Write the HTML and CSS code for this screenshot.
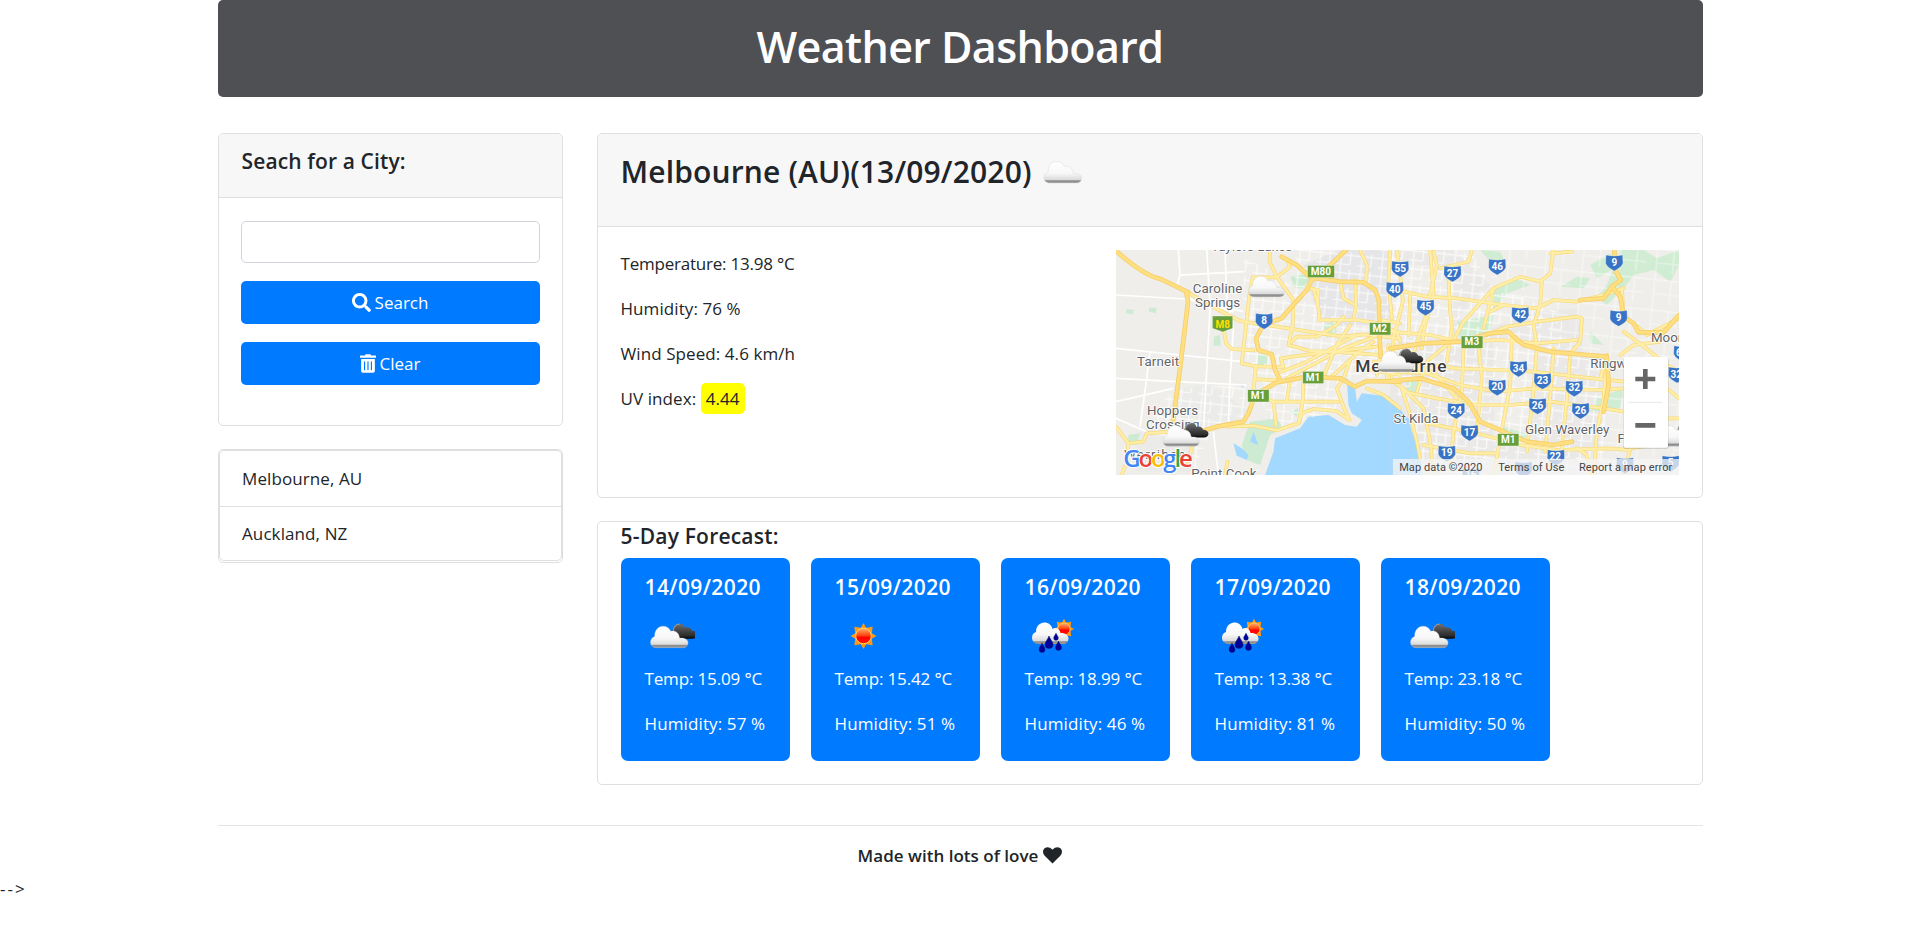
FILE: index.html
```html
<!DOCTYPE html>
<html lang="en">
<head>
<meta charset="utf-8">
<title>Weather Dashboard</title>
<link rel="stylesheet" href="styles.css">
</head>
<body>
<svg class="defs" width="0" height="0" aria-hidden="true">
  <defs>
    <linearGradient id="gLight" x1="0" y1="0" x2="0" y2="1"><stop offset="0" stop-color="#fff"/><stop offset=".55" stop-color="#f8f8f8"/><stop offset=".84" stop-color="#dcdcdc"/><stop offset=".9" stop-color="#8a8a8a"/><stop offset="1" stop-color="#a0a0a0"/></linearGradient>
    <linearGradient id="gDark" x1="0" y1="0" x2="0" y2="1"><stop offset="0" stop-color="#707070"/><stop offset=".5" stop-color="#444"/><stop offset=".8" stop-color="#2c2c2c"/><stop offset="1" stop-color="#050505"/></linearGradient>
    <linearGradient id="gSun" x1="0" y1="0" x2="0" y2="1"><stop offset="0" stop-color="#ffb070"/><stop offset=".45" stop-color="#ff4a10"/><stop offset=".6" stop-color="#f00"/><stop offset="1" stop-color="#ff1a00"/></linearGradient>
    <g id="cloudShape"><path d="M6 22C2 22 0 19.500 0 16.500C0 13.500 2 11.500 4.200 10.800C3.800 5 7.500 0.500 12.500 0.500C16.500 0.500 19 2.500 20.200 5.500C24 4.300 28 6.500 28.800 11C29.200 11.200 29.200 12 29.200 12.500C33 11.800 37.500 13.500 37.500 17C37.500 20 35.500 22 32.500 22Z"/></g>
    <g id="cloud"><use href="#cloudShape" fill="url(#gLight)" stroke="#ccc" stroke-opacity=".6" stroke-width=".6"/></g>
    <g id="broken">
      <path d="M22 6C22 1 26 -2.500 30 -2C33 -1.500 34 0 34.500 2C38 .500 40.500 2.500 41.500 5C45 5 47 7 47 9C47 11.500 45 13 42 13H28Z" fill="url(#gDark)"/>
      <path d="M23 5C23 1 26-1.800 29-1.500" fill="none" stroke="#aaa" stroke-width="1"/>
      <use href="#cloud"/>
    </g>
    <g id="sun">
      <path d="M0-13L2.700-8.300L9.200-9.200L8.300-2.700L13 0L8.300 2.700L9.200 9.200L2.700 8.300L0 13L-2.700 8.300L-9.200 9.200L-8.300 2.700L-13 0L-8.300-2.700L-9.200-9.200L-2.700-8.300Z" fill="#ff9a10"/>
      <circle r="7.800" fill="url(#gSun)" stroke="#ffd56a" stroke-width="1"/>
    </g>
    <g id="drop"><path d="M0-6C1-3 4 0 4 2.500A4 4 0 0 1-4 2.500C-4 0-1-3 0-6Z" fill="#00009a" stroke="#001050" stroke-width=".5"/></g>
    <g id="rain">
      <use href="#sun" transform="translate(32 6) scale(.78)"/>
      <path d="M7 21C2 21 0 18 0 14.500C0 11.500 2 9.500 4 9C4 3 8-.500 12.500-.500C16.500-.500 19.500 2 20.500 6C24 3.500 28 6 28.500 10C33 10 36.500 12 36.500 15.500C36.500 19 34 21 31 21Z" fill="url(#gLight)"/>
      <use href="#drop" x="17" y="19"/><use href="#drop" transform="translate(10 24.500) scale(.75)"/><use href="#drop" transform="translate(26.500 22.500) scale(.75)"/><use href="#drop" transform="translate(24 13.500) scale(.6)"/>
    </g>
    <g id="shield"><path d="M-25-22Q0-16 25-22L26 3Q22 15 0 26Q-22 15-26 3Z" fill="#3873c5" stroke="#fff" stroke-opacity=".5" stroke-width="2"/></g>
  </defs>
</svg>

<div class="container">
  <header class="banner"><h1>Weather Dashboard</h1></header>
  <div class="row">
    <aside class="side">
      <section class="card search">
        <div class="card-header"><h5>Seach for a City:</h5></div>
        <div class="card-body">
          <input class="field" type="text" aria-label="City">
          <button class="btn"><svg width="19" height="19" viewBox="0 0 512 512"><path fill="currentColor" d="M505 442.700L405.300 343c-4.500-4.500-10.600-7-17-7H372c27.600-35.300 44-79.700 44-128C416 93.100 322.900 0 208 0S0 93.100 0 208s93.100 208 208 208c48.300 0 92.700-16.400 128-44v16.300c0 6.400 2.500 12.500 7 17l99.700 99.700c9.400 9.400 24.600 9.400 33.900 0l28.300-28.300c9.400-9.400 9.400-24.600.1-34zM208 336c-70.700 0-128-57.200-128-128 0-70.700 57.200-128 128-128 70.700 0 128 57.200 128 128 0 70.700-57.200 128-128 128z"/></svg><span>Search</span></button>
          <button class="btn clear"><svg width="16" height="19" viewBox="0 0 448 512"><path fill="currentColor" fill-rule="evenodd" d="M32 464a48 48 0 0 0 48 48h288a48 48 0 0 0 48-48V128H32zm272-256a16 16 0 0 1 32 0v224a16 16 0 0 1-32 0zm-96 0a16 16 0 0 1 32 0v224a16 16 0 0 1-32 0zm-96 0a16 16 0 0 1 32 0v224a16 16 0 0 1-32 0zM432 32H312l-9.400-18.700A24 24 0 0 0 281.100 0H166.800a23.700 23.700 0 0 0-21.400 13.300L136 32H16A16 16 0 0 0 0 48v32a16 16 0 0 0 16 16h416a16 16 0 0 0 16-16V48a16 16 0 0 0-16-16z"/></svg><span>Clear</span></button>
        </div>
      </section>
      <section class="card history">
        <ul class="list"><li>Melbourne, AU</li><li>Auckland, NZ</li></ul>
      </section>
    </aside>
    <main class="main">
      <section class="card current">
        <div class="card-header"><h3>Melbourne (AU)(13/09/2020)</h3><svg class="now" width="40" height="24" viewBox="-1 -1 40 24"><use href="#cloud"/></svg></div>
        <div class="card-body">
          <div class="stats">
            <p class="temp">Temperature: 13.98 °C</p>
            <p>Humidity: 76 %</p>
            <p>Wind Speed: 4.6 km/h</p>
            <p>UV index: <span class="uv">4.44</span></p>
          </div>
          <svg class="map" viewBox="0 0 1688 675" preserveAspectRatio="none">
            <defs>
              <pattern id="streets" width="62" height="54" patternUnits="userSpaceOnUse" patternTransform="rotate(6)"><path d="M0 10H62M0 38H40M12 0V54M40 0V38" stroke="#fff" stroke-width="4" fill="none"/></pattern>
              <pattern id="blocks" width="110" height="92" patternUnits="userSpaceOnUse" patternTransform="rotate(6)"><path d="M0 20H110M30 0V92M80 20V92M30 62H110" stroke="#fff" stroke-width="4" fill="none"/></pattern>
              <g id="west">
                <path d="M228 140L320 192L390 228L440 236L520 248L610 262L700 275L760 268L870 280"/>
                <path d="M340 250L348 295L365 312L430 316M480 15L478 50L500 95L550 165L548 240L535 300L600 318L700 322L812 330"/>
                <path d="M428 97L418 150L395 355L437 364L430 440M428 97L500 97L540 65L530 45"/>
                <path d="M437 364L520 366L512 340L640 322L800 305M437 403L500 405M610 130L625 190L628 225L740 225L808 235"/>
                <path d="M600 132L625 135L622 180M750 15L770 60L768 110M735 105L738 180L730 225M545 290L560 275L620 275L680 240L700 215"/>
                <path d="M440 450L490 470L580 470L685 470M490 470L498 540M580 400L578 470L565 535M540 400L530 470"/>
                <path d="M500 385L580 355L740 270M530 400L700 310L808 270M640 395L680 300L720 240M660 400L735 330L790 290"/>
                <path d="M720 345L700 400L680 430L700 485L718 525L680 498L610 492L575 505L565 535L500 556L430 542L350 545"/>
                <path d="M18 545L55 595L100 590L110 565L180 560M55 595L50 650L35 690M250 590L232 660M352 650L345 690"/>
                <path d="M832 250L860 260L870 290M790 350L870 370M780 375L870 390M810 330L800 390M835 300L830 400M770 430L820 450L870 490"/>
                <path d="M808 225L870 235M840 15L835 110L845 220M690 110L700 160L735 180"/>
              </g>
              <g id="westMain">
                <path d="M18 18C60 55 110 95 152 102L235 142M228 140L234 170L210 370L190 520L185 545"/>
                <path d="M515 35L560 60L600 97L690 110L760 112L795 135L806 165L808 270L812 335M708 15L655 65L603 108L590 135L540 190L515 220L460 238L438 280L445 315L485 328L495 375L510 405"/>
                <path d="M270 560L320 545L400 530L415 505L435 450L500 412L590 395L690 400L735 425L770 408L870 410"/>
              </g>
              <g id="east">
                <path d="M20 15L30 90L38 170L10 280L5 400M120 15L130 150L100 260L95 310M175 100L180 200L185 250L170 350M0 130L110 155L200 160L340 180"/>
                <path d="M245 15L235 50L150 70M190 285L220 230L310 130L390 95L450 110L480 85L490 15M455 110L450 180L430 240L440 310L430 430L410 620"/>
                <path d="M300 200L340 180L440 190L490 165L560 170L640 150L700 130M290 270L350 245L440 230L560 215L575 220L570 290L545 320"/>
                <path d="M675 80L690 105L665 125M695 130L700 230M545 20L480 25M0 330L90 355L200 370L330 375L430 380L560 395L700 410"/>
                <path d="M0 260L120 270L210 290L330 285L440 295L560 285M0 380L110 385L210 420L320 440L440 430L640 435L700 430"/>
                <path d="M220 310L215 440L190 560L180 660M265 300L275 400L260 560M365 270L360 420L330 580L310 690M490 310L480 450L465 620M540 320L530 460L510 650M650 330L640 460L620 560L610 690"/>
                <path d="M40 440L140 460L260 480L360 480L480 470L640 490L700 500M90 530L260 565L390 600L500 615L650 610L720 615M100 600L240 625L320 625"/>
                <path d="M35 430L60 510L80 590L90 640M0 405L40 430L100 490L120 590L130 680M0 360L130 380L200 460"/>
                <path d="M735 240L770 270L866 220M700 260L755 300L830 360L866 380M690 330L730 300L810 290M720 610L780 600L866 560M830 430L866 460M650 330L630 400M170 300L110 350L80 440"/>
                <path d="M720 610L700 690M560 610L590 630L600 690M835 520L866 520M120 180L90 260L60 360M310 130L280 250M130 20L140 60L120 150M60 150L55 270"/>
              </g>
              <g id="eastMain">
                <path d="M0 310L100 295L210 290L300 265L355 260L400 300L480 320L590 330L650 335L655 420L640 500"/>
                <path d="M0 408L90 400L190 430L235 470L270 530L340 560L410 590L490 600L545 590"/>
                <path d="M672 15L675 75L692 105L665 125L690 155L700 215L730 235L745 262L820 262L866 210M665 125L640 160L570 165"/>
              </g>
            </defs>
            <rect width="1688" height="675" fill="#efeeea"/>
            <g transform="translate(-18 -15)">
              <path d="M580 60L690 15H870V240H740L650 250L610 170Z" fill="#e6e6e8"/>
              <path d="M80 560L200 550L250 600L250 680H80ZM200 430L300 420L420 500L360 550H200Z" fill="#ebebe9"/>
              <g fill="#cdebd2"><path d="M540 95L600 85L590 130L555 130ZM443 325H472V360H443ZM312 275L330 270L332 302H310ZM117 188L140 188L138 205L117 200ZM50 192L72 195L68 208L48 205ZM420 530L500 520L520 550L480 570L450 660L410 645L395 600ZM55 570L90 565L80 600L55 590ZM540 500L565 490L560 515ZM640 240L670 230L680 260L650 280Z"/></g>
              <path d="M465 690L490 620L495 580L570 550L595 515L655 510L705 540L740 545L755 525L725 505L715 480L710 400L735 430L740 470L755 445L840 455L870 480V690Z" fill="#a3d8ff"/>
              <path d="M370 595L395 610L415 630L410 645L380 632ZM430 560L420 590L445 600ZM390 415L410 435L395 425Z" fill="#a3d8ff"/>
            </g>
            <g transform="translate(822 -15)">
              <path d="M0 15H190L300 120L200 220L300 250L440 200L560 190L580 325L650 340L640 600L560 690H0Z" fill="#eae9e8"/>
              <path d="M0 60H190V280H0ZM310 290H430V600H310Z" fill="#efeeea"/>
              <g fill="#d0ecd3"><path d="M270 15L330 20L350 60L300 50ZM300 140L380 100L420 120L350 145L310 200ZM200 230L310 210L300 260L210 280ZM510 125L560 95L600 100L580 130ZM600 60L660 25L690 60L620 100ZM690 15H760L800 40L866 15V60L840 110L790 75L730 90L700 130L650 180L620 160L650 120ZM600 260L640 300L600 295ZM340 545L420 570L350 600ZM620 460L700 430L690 490L600 500ZM50 400L90 410L80 440H50Z"/></g>
              <path d="M0 465L25 490L55 520L65 560L90 610L95 690H0Z" fill="#a3d8ff"/>
            </g>
            <g transform="translate(-18 -15)">
              <path d="M560 15H870V420L740 400L430 440L420 320L540 290ZM100 545L190 430L410 420L400 530L300 560L250 690L200 600ZM430 430L690 400L700 490L500 550ZM400 40L540 100V300L400 350Z" fill="url(#streets)" opacity=".7"/>
              <path d="M18 150L228 162L400 200M18 310L210 330L400 350M18 400L200 410L410 420M205 15L210 90L400 80M290 15L300 180L370 200M210 90L200 125M120 320L110 400L90 545M18 470L190 430M345 15L350 160L370 250L360 400L355 530M240 160L300 190L280 560M18 520L110 560M310 560L325 690M500 560L490 550" fill="none" stroke="#fff" stroke-width="5"/>
            </g>
            <g transform="translate(822 -15)">
              <path d="M0 15H240L300 120L500 200L570 340L650 350L640 690H100L60 480L0 430Z" fill="url(#streets)" opacity=".75"/>
              <path d="M310 15H866V690H640L580 320L300 120Z" fill="url(#blocks)" opacity=".45"/>
            </g>
            <g fill="none" stroke-linejoin="round" stroke-linecap="round">
              <g transform="translate(-18 -15)"><use href="#west" class="r1"/></g><g transform="translate(822 -15)"><use href="#east" class="r1"/></g>
              <g transform="translate(-18 -15)"><use href="#west" class="r2"/></g><g transform="translate(822 -15)"><use href="#east" class="r2"/></g>
              <g transform="translate(-18 -15)"><use href="#westMain" class="m1"/></g><g transform="translate(822 -15)"><use href="#eastMain" class="m1"/></g>
              <g transform="translate(-18 -15)"><use href="#westMain" class="m2"/></g><g transform="translate(822 -15)"><use href="#eastMain" class="m2"/></g>
            </g>
            <g transform="translate(-18 -15)" class="place">
              <text x="303" y="19" textLength="243">Taylors Lakes</text>
              <text x="248" y="145" textLength="149">Caroline</text><text x="255" y="186" textLength="135">Springs</text>
              <text x="81" y="364" textLength="126">Tarneit</text>
              <text x="111" y="511" textLength="153">Hoppers</text><text x="108" y="551" textLength="160">Crossing</text>
              <text x="42" y="643" textLength="184">Werribee</text><text x="244" y="698" textLength="195">Point Cook</text>
              <text x="735" y="381" class="city" textLength="274">Melbourne</text>
              <g class="tag"><rect x="592" y="61" width="81" height="37"/><rect x="778" y="233" width="64" height="37"/><rect x="578" y="379" width="63" height="37"/><rect x="413" y="434" width="64" height="37"/><path d="M307 213H368V250L338 261L307 250Z"/></g>
              <g class="num"><text x="632" y="90">M80</text><text x="809" y="262">M2</text><text x="609" y="408">M1</text><text x="444" y="463">M1</text><text x="338" y="248" fill="#ffe000">M8</text></g>
              <use href="#shield" x="462" y="227"/><text class="num" x="462" y="237">8</text>
            </g>
            <g transform="translate(822 -15)">
              <g class="place"><text x="10" y="534" textLength="135">St Kilda</text><text x="404" y="567" textLength="253">Glen Waverley</text><text x="600" y="369">Ringwood</text><text x="782" y="290">Mooroolbark</text><text x="682" y="593">Ferntree Gully</text></g>
              <g class="tag"><rect x="213" y="273" width="65" height="37"/><rect x="322" y="566" width="64" height="37"/></g>
              <g><use href="#shield" x="30" y="70"/><use href="#shield" x="14" y="133"/><use href="#shield" x="187" y="85"/><use href="#shield" x="321" y="64"/><use href="#shield" x="106" y="186"/><use href="#shield" x="390" y="209"/><use href="#shield" x="672" y="52"/><use href="#shield" x="685" y="218"/><use href="#shield" x="385" y="370"/><use href="#shield" x="321" y="426"/><use href="#shield" x="457" y="407"/><use href="#shield" x="552" y="429"/><use href="#shield" x="442" y="482"/><use href="#shield" x="571" y="496"/><use href="#shield" x="198" y="496"/><use href="#shield" x="238" y="562"/><use href="#shield" x="170" y="624"/><use href="#shield" x="497" y="636"/><use href="#shield" x="860" y="388"/><use href="#shield" x="876" y="324"/><use href="#shield" x="704" y="660"/><use href="#shield" x="841" y="654"/><use href="#shield" x="400" y="672"/><use href="#shield" x="242" y="692"/></g>
              <g class="num"><text x="30" y="80">55</text><text x="14" y="143">40</text><text x="187" y="95">27</text><text x="321" y="74">46</text><text x="106" y="196">45</text><text x="390" y="219">42</text><text x="672" y="62">9</text><text x="685" y="228">9</text><text x="385" y="380">34</text><text x="321" y="436">20</text><text x="457" y="417">23</text><text x="552" y="439">32</text><text x="442" y="492">26</text><text x="571" y="506">26</text><text x="198" y="506">24</text><text x="238" y="572">17</text><text x="170" y="634">19</text><text x="495" y="644">22</text><text x="858" y="398">32</text><text x="866" y="334">6</text><text x="704" y="668">9</text><text x="841" y="662">5</text><text x="242" y="698">16</text><text x="245" y="301">M3</text><text x="354" y="594">M1</text></g>
            </g>
            <g transform="translate(-18 -15)">
              <use href="#cloud" transform="translate(415 92) scale(2.900)"/><use href="#broken" transform="translate(159 540) scale(2.900)"/><use href="#broken" transform="translate(803 317) scale(2.900)"/>
              <use href="#broken" transform="translate(1638 540) scale(2.900)"/>
              <text class="logo" x="40" y="665" textLength="208"><tspan fill="#4285f4">G</tspan><tspan fill="#ea4335">o</tspan><tspan fill="#fbbc05">o</tspan><tspan fill="#4285f4">g</tspan><tspan fill="#34a853">l</tspan><tspan fill="#ea4335">e</tspan></text>
            </g>
            <g transform="translate(822 -15)">
              <rect x="698" y="338" width="137" height="274" rx="8" fill="#000" opacity=".14"/>
              <rect x="700" y="336" width="133" height="272" rx="6" fill="#fff"/><path d="M714 472H816" stroke="#e6e6e6" stroke-width="3"/>
              <path d="M735 402H795M765 372V432M735 541H795" stroke="#666" stroke-width="14"/>
              <rect x="8" y="642" width="860" height="48" fill="#f5f5f5" opacity=".76"/>
              <g class="legal"><text x="27" y="678" textLength="250">Map data ©2020</text><text x="324" y="678" textLength="198">Terms of Use</text><text x="566" y="678" textLength="280">Report a map error</text></g>
            </g>
          </svg>
        </div>
      </section>
      <section class="card forecast">
        <h5>5-Day Forecast:</h5>
        <div class="days">
          <article class="day"><h5>14/09/2020</h5><svg width="50" height="50" viewBox="0 0 50 50"><use href="#broken" transform="translate(5.500 14.700)"/></svg><p>Temp: 15.09 °C</p><p>Humidity: 57 %</p></article>
          <article class="day"><h5>15/09/2020</h5><svg width="50" height="50" viewBox="0 0 50 50"><use href="#sun" transform="translate(28.500 25)"/></svg><p>Temp: 15.42 °C</p><p>Humidity: 51 %</p></article>
          <article class="day"><h5>16/09/2020</h5><svg width="50" height="50" viewBox="0 0 50 50"><use href="#rain" transform="translate(7 12)"/></svg><p>Temp: 18.99 °C</p><p>Humidity: 46 %</p></article>
          <article class="day"><h5>17/09/2020</h5><svg width="50" height="50" viewBox="0 0 50 50"><use href="#rain" transform="translate(7 12)"/></svg><p>Temp: 13.38 °C</p><p>Humidity: 81 %</p></article>
          <article class="day"><h5>18/09/2020</h5><svg width="50" height="50" viewBox="0 0 50 50"><use href="#broken" transform="translate(5.500 14.700)"/></svg><p>Temp: 23.18 °C</p><p>Humidity: 50 %</p></article>
        </div>
      </section>
    </main>
  </div>
  <footer class="footer"><span>Made with lots of love</span><svg width="19" height="17" viewBox="0 0 19 17"><path fill="currentColor" d="M9.500 16.600L1.700 8.800C-.600 6.300-.400 3 1.600 1.300C3.800-.500 7 0 9 2.200L9.500 2.700L10 2.200C12-.100 15.200-.500 17.400 1.300C19.400 3 19.600 6.300 17.300 8.800Z"/></svg></footer>
</div>
<div class="stray">--&gt;</div>
</body>
</html>
```
FILE: styles.css
```css
* { box-sizing: border-box; }
body { margin: 0; background: #fff; color: #212529; font: 400 17px/27px "Open Sans", "Noto Sans", sans-serif; letter-spacing: 0; }
h1, h3, h5, p, ul { margin: 0; padding: 0; font-weight: 600; }
p { font-weight: 400; }
.defs { position: absolute; }
.container { width: 1485px; margin: 0 auto; }
.banner { height: 97px; background: #4f5054; border-radius: 5px; color: #fff; display: flex; justify-content: center; padding-top: 20px; }
.banner h1 { font-size: 43px; line-height: 54px; letter-spacing: -0.6px; }
.row { display: flex; gap: 34px; margin-top: 36px; align-items: flex-start; }
.side { width: 345px; display: flex; flex-direction: column; gap: 23px; }
.main { width: 1106px; display: flex; flex-direction: column; gap: 23px; }
.card { border: 1px solid #dfdfdf; border-radius: 5px; background: #fff; }
.card-header { background: #f7f7f7; border-bottom: 1px solid #dfdfdf; border-radius: 4px 4px 0 0; padding: 14px 23px; }
h5 { font-size: 21px; line-height: 27px; letter-spacing: 0.2px; }
.search { height: 293px; }
.search .card-header { height: 64px; }
.search .card-header h5 { letter-spacing: 0.12px; }
.search .card-body { padding: 23px 22px; display: flex; flex-direction: column; gap: 18px; }
.field { height: 42px; width: 100%; border: 1px solid #ced4da; border-radius: 5px; }
.btn { height: 43px; border: 0; border-radius: 5px; background: #007bff; color: #fff; font: inherit; letter-spacing: inherit; display: flex; align-items: center; justify-content: center; gap: 4px; padding: 0 0 1px; }
.history { height: 114px; }
.list { list-style: none; border: 1px solid #dfdfdf; border-radius: 5px; height: 111px; font-weight: 400; }
.list li { height: 55px; padding: 14px 22.5px; letter-spacing: 0.1px; }
.list li + li { border-top: 1px solid #dfdfdf; padding-top: 13px; }
.current { height: 365px; }
.current .card-header { height: 93px; padding: 19px 23px; display: flex; gap: 11px; }
h3 { font-size: 30px; line-height: 38px; letter-spacing: 0.15px; }
.now { margin-top: 7px; }
.current .card-body { padding: 23px; display: flex; justify-content: space-between; }
.stats { display: flex; flex-direction: column; gap: 18px; letter-spacing: 0.08px; }
.stats .temp { letter-spacing: -0.22px; }
.uv { background: #ff0; border-radius: 5px; padding: 4px 5px; }
.map { width: 563px; height: 225px; display: block; overflow: hidden; }
.r1 { stroke: #f8d978; stroke-width: 11px; }
.r2 { stroke: #ffeea8; stroke-width: 7px; }
.m1 { stroke: #f5ce69; stroke-width: 14px; }
.m2 { stroke: #ffdf80; stroke-width: 9px; }
.place text { font: 400 40px Roboto, sans-serif; letter-spacing: 0; fill: #5f6368; stroke: #fff; stroke-width: 5px; paint-order: stroke; }
.place .city { font-weight: 500; font-size: 52px; fill: #3c3c3c; }
.tag { fill: #689f38; stroke: #fff; stroke-opacity: .6; stroke-width: 2px; }
.num, .num text, .place .num, .place .num text { font: 700 30px Roboto, sans-serif; letter-spacing: 0; fill: #fff; stroke: none; text-anchor: middle; }
.place .num text[fill] { fill: #ffe000; }
.logo { font: 600 72px "Open Sans", sans-serif; letter-spacing: 0; stroke: #fff; stroke-width: 6px; paint-order: stroke; }
.legal { font: 400 33px Roboto, sans-serif; letter-spacing: 0; fill: #444; }
.forecast { height: 264px; padding: 1px 23px 0; }
.days { display: flex; gap: 21px; margin-top: 8px; }
.day { width: 169px; height: 203px; border-radius: 7px; background: #007bff; color: #fff; padding: 16px 23px 0 24px; }
.day h5 { letter-spacing: 0.4px; white-space: nowrap; }
.day p { letter-spacing: -0.15px; white-space: nowrap; }
.day svg { display: block; margin: 10px 0 4px; }
.day p + p { margin-top: 18px; letter-spacing: 0.12px; }
.footer { margin-top: 40px; border-top: 1px solid #e5e5e5; padding-top: 16px; display: flex; justify-content: center; align-items: center; gap: 5px; font-weight: 600; letter-spacing: 0.02px; }
.stray { margin-top: 6px; letter-spacing: 2px; }
```
